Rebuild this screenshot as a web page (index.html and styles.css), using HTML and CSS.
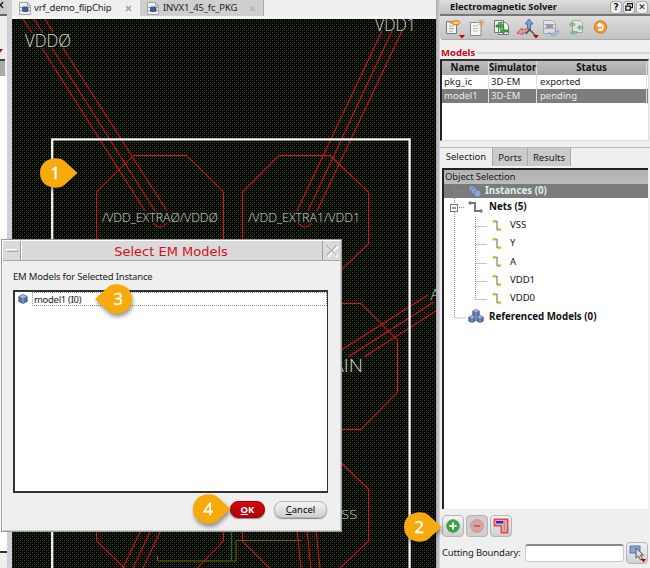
FILE: index.html
```html
<!DOCTYPE html>
<html lang="en">
<head>
<meta charset="utf-8">
<title>Electromagnetic Solver</title>
<link rel="stylesheet" href="styles.css">
</head>
<body>
<svg class="defs" width="0" height="0">
  <defs>
    <symbol id="i-doc" viewBox="0 0 12 13"><path d="M.5.5h8l3 3v9H.5z" fill="#eef0f4" stroke="#a5a5a5"/><path d="M8.500 .5v3h3" fill="none" stroke="#a5a5a5"/><path d="M1 5.500h10M1 8.500h10" stroke="#d98a8a"/><rect x="3" y="4.500" width="6.500" height="5.500" rx="1.500" fill="#3b5d94"/></symbol>
    <symbol id="i-net" viewBox="0 0 10 13"><path d="M2 2.500h3v8h3" fill="none" stroke="#8a8a7a" stroke-width="1.300"/><path d="M.6 2.900l2.800-1.500M6.300 11.600L9 10" stroke="#d9bd20" stroke-width="2.200"/></symbol>
    <symbol id="i-cube" viewBox="0 0 10 10"><path d="M5 .5l4.200 2v5L5 9.600.8 7.500v-5z" fill="#5370a5" stroke="#344f80" stroke-width=".7"/><path d="M5 .8l3.800 1.800L5 4.500 1.200 2.600z" fill="#a4b6da"/><path d="M5 4.500v5" stroke="#c3d0e8" stroke-width=".7"/></symbol>
  </defs>
</svg>
<div class="app">
  <aside class="left">
    <div class="left-close"><svg width="5" height="10"><path d="M-2 2l5 6M3 2l-5 6" stroke="#222" stroke-width="1.500"/></svg></div>
    <svg class="left-tri" width="6" height="4"><path d="M0 0h3L0 4z" fill="#c00"/></svg>
    <div class="left-head"></div>
    <div class="left-body"></div>
    <div class="left-foot"></div>
  </aside>
  <main class="editor">
    <div class="doc-tabs">
      <div class="doc-tab on"><svg width="12" height="13"><use href="#i-doc"/></svg><span>vrf_demo_flipChip</span><svg width="7" height="7"><path d="M1 1l5 5M6 1L1 6" stroke="#999" stroke-width="1.300"/></svg></div>
      <div class="doc-tab off"><svg width="12" height="13"><use href="#i-doc"/></svg><span>INVX1_45_fc_PKG</span><svg width="7" height="7"><path d="M1 1l5 5M6 1L1 6" stroke="#b4b4b4" stroke-width="1.300"/></svg></div>
    </div>
    <svg class="canvas" width="424" height="549" viewBox="12 19 424 549">
      <defs>
        <pattern id="grid" width="4" height="4" patternUnits="userSpaceOnUse">
          <rect width="4" height="4" fill="#050803"/><rect width="1" height="1" x="0" y="0" fill="#3a4a2d"/><rect width="1" height="1" x="2" y="2" fill="#3a4a2d"/><rect width="1" height="1" x="2" y="0" fill="#18210f"/><rect width="1" height="1" x="0" y="2" fill="#18210f"/>
        </pattern>
      </defs>
      <rect x="12" y="19" width="424" height="549" fill="url(#grid)"/>
      <g class="wire">
        <path d="M23 19l9 14M34 19l9 14M45 19l8 13M42 48l103 163M52 48l103 163M63 48l104 163"/>
        <path d="M382 31L297 211M392 31L308 211M402 31L317 211"/>
        <path d="M96.500 260v-68l37-36.500h53l37 36.500v68M242.500 260v-68l36.500-36.500h51l38.500 36.500v52l-38 36h-52"/>
        <path d="M153 223q7 8 14 0M298 223q7 8 14 0"/>
        <path d="M335 303.500h26l36.500 36.500v52l-36.500 37.500h-26M428 295L335 354M434 302L348 357M436 311L364 357"/>
        <path d="M335 457l33.500 32v52l-31.500 30M242.500 528v13l29 29M223.500 528v13l-28 29M96.500 528v13l28 27M141 530l-18 38M151 530l-18 38M161 530l-18 38M297 530l4 38M307 530l4 38M316 530l4 38"/>
      </g>
      <path d="M157.500 556v5H236v-20.500h66" class="olive"/>
      <path d="M231.500 528v33" class="green"/>
      <path d="M52.200 568V139.300H409.600V568" class="boundary"/>
      <g class="label">
        <text x="25" y="47" font-size="18" textLength="46" lengthAdjust="spacingAndGlyphs">VDDØ</text>
        <text x="375" y="30.500" font-size="17.500" textLength="41" lengthAdjust="spacingAndGlyphs">VDD1</text>
        <text x="102" y="222" font-size="12.800" textLength="116" lengthAdjust="spacingAndGlyphs">/VDD_EXTRAØ/VDDØ</text>
        <text x="248" y="222" font-size="12.800" textLength="112" lengthAdjust="spacingAndGlyphs">/VDD_EXTRA1/VDD1</text>
        <text x="430.500" y="300" font-size="15">A</text>
        <text x="332" y="372" font-size="18" textLength="31" lengthAdjust="spacingAndGlyphs">AIN</text>
        <text x="333" y="519" font-size="13.500" textLength="24" lengthAdjust="spacingAndGlyphs">VSS</text>
      </g>
    </svg>
  </main>
  <div class="splitter"></div>
  <section class="solver">
    <header class="dock-title"><span>Electromagnetic Solver</span><i>?</i><i><svg width="8" height="8"><path d="M2.500 2V.7h5v4H6M.8 3.200h4.500v4H.8z" fill="none" stroke="#111" stroke-width="1.300"/></svg></i><i>✕</i></header>
    <div class="toolbar">
      <svg width="210" height="24" viewBox="440 16 210 24">
        <path d="M446.500 21.500h10v12h-10z" fill="#f3f3f3" stroke="#777"/><path d="M449 26h5M449 28.500h5M449 31h4" stroke="#aaa"/><ellipse cx="456" cy="22.700" rx="3.700" ry="2.200" fill="#f8c96f" stroke="#c98222"/><path d="M449 21.500l4 2" stroke="#d59b4a" stroke-width="2"/>
        <path d="M459 35h6l-3 3.500zM533 35h6l-3 3.500z" fill="#c80000"/>
        <path d="M470.500 22.500h10.500v13h-10.500z" fill="#f6f6f6" stroke="#888"/><path d="M473 26h5M473 28.500h5M473 31h5" stroke="#bbb"/><path d="M481 19v7M477.500 22.500h7M478.500 20l5 5M483.500 20l-5 5" stroke="#d99b4e"/>
        <path d="M494.500 20.500h9v12h-9zM498.500 22.500h7l3 3v9h-10z" fill="#eee" stroke="#777"/><path d="M496 25h4v-2.500l4 3.500-4 3.500V27h-4zM508 30h-4v-2l-4 3 4 3v-2h4z" fill="#32ad32" stroke="#167a1c" stroke-width=".6"/>
        <path d="M527.500 29v-5h-2.500l4-5 4 5h-2.500v6z" fill="#7da0dc" stroke="#496fae"/><path d="M528 28.500l-6 1.500v-2l-5 5 6 1.500V33l6-1.500z" fill="#e99b9b" stroke="#b55c5c"/><path d="M529 29l6 6M529 30l-3 4" stroke="#555" stroke-width="1.500"/>
        <g opacity=".55"><path d="M543.500 20.500h9l3 3v10h-12z" fill="#eee" stroke="#888"/><path d="M543 24.500h12M543 28.500h12" stroke="#d77"/><rect x="546" y="24" width="7" height="4" fill="#4b75ae"/><path d="M549 32c3 3 5 1 6-1l4 0c-1 5-8 7-10 1z" fill="#8eb3e8" stroke="#5c86c0"/></g>
        <g opacity=".6"><path d="M572.500 20.500h8l2 2v10h-10z" fill="#eee" stroke="#888"/><path d="M569 24.500l3-2.500v1.500h3v2h-3V27zM577 27.500l3-2.500v1.500h3v2h-3V30zM570 32.500l3-2.500v1.500h4v2h-4V35z" fill="#54bd54" stroke="#278b31" stroke-width=".5"/></g>
        <circle cx="600.500" cy="27" r="6.200" fill="#f59a36" stroke="#d37418"/><path d="M598.500 25h2.500a2.500 2.500 0 1 1-2.500 4" fill="none" stroke="#fff" stroke-width="1.900"/><path d="M596.500 25l4-3v6z" fill="#fff"/>
      </svg>
    </div>
    <div class="group-title"><span>Models</span></div>
    <div class="models">
      <div class="row head"><span>Name</span><span>Simulator</span><span>Status</span></div>
      <div class="row"><span>pkg_ic</span><span>3D-EM</span><span>exported</span></div>
      <div class="row sel"><span>model1</span><span>3D-EM</span><span>pending</span></div>
    </div>
    <nav class="tabs"><span class="on">Selection</span><span>Ports</span><span>Results</span></nav>
    <div class="tree">
      <div class="tree-head">Object Selection</div>
      <div class="tree-body">
        <div class="node root sel"><svg width="14" height="13"><g fill="#8fa6d0" stroke="#556f9f" stroke-width=".7"><circle cx="4" cy="4" r="3.300"/><circle cx="6.500" cy="6" r="3.300"/><circle cx="9.500" cy="8.500" r="3.600"/></g></svg><b>Instances (0)</b></div>
        <div class="node root nets"><svg width="15" height="12"><path d="M2 2h5v8h6" fill="none" stroke="#777" stroke-width="2"/><circle cx="2" cy="2" r="1.700" fill="#777"/><circle cx="13" cy="10" r="1.700" fill="#777"/></svg><b>Nets (5)</b></div>
        <div class="node leaf"><svg width="10" height="13"><use href="#i-net"/></svg><span>VSS</span></div>
        <div class="node leaf"><svg width="10" height="13"><use href="#i-net"/></svg><span>Y</span></div>
        <div class="node leaf"><svg width="10" height="13"><use href="#i-net"/></svg><span>A</span></div>
        <div class="node leaf"><svg width="10" height="13"><use href="#i-net"/></svg><span>VDD1</span></div>
        <div class="node leaf"><svg width="10" height="13"><use href="#i-net"/></svg><span>VDD0</span></div>
        <div class="node root"><svg width="16" height="15"><use href="#i-cube" x="4" y="0" width="8" height="8"/><use href="#i-cube" x="0" y="6" width="8" height="8"/><use href="#i-cube" x="8" y="6" width="8" height="8"/></svg><b>Referenced Models (0)</b></div>
        <svg class="branches" width="44" height="140" viewBox="444 183 44 140"><path d="M454.500 183v20M454.500 211v106h11M454.500 190.500h11M459 206.500h6M475.500 216v82.500M475.500 225.500h11M475.500 243.500h11M475.500 262.500h11M475.500 280.500h11M475.500 298.500h11" class="dots"/><rect x="450.500" y="203.500" width="7" height="7" fill="#fff" stroke="#777"/><path d="M452 207h4" stroke="#222"/></svg>
      </div>
    </div>
    <div class="actions">
      <button><svg width="14" height="14"><circle cx="7" cy="7" r="6.300" fill="#35a73a" stroke="#4aa050"/><path d="M7 3.500v7M3.500 7h7" stroke="#fff" stroke-width="2"/></svg></button>
      <button class="dim"><svg width="14" height="14"><circle cx="7" cy="7" r="6.300" fill="#dda0a0" stroke="#d29090"/><path d="M4 7h6" stroke="#b47070" stroke-width="2"/></svg></button>
      <button><svg width="16" height="16"><path d="M1.500 1.500h13v13h-6v-7h-7z" fill="#fff" stroke="#f4434b" stroke-width="2"/><path d="M3 4.300h7.500" stroke="#2430c8" stroke-width="2.600"/><path d="M11.500 3v10" stroke="#8aa88c" stroke-width="2.500"/></svg></button>
    </div>
    <div class="cutting"><label>Cutting Boundary:</label><div class="field"></div><button><svg width="20" height="20"><rect x="3" y="3" width="10" height="7" fill="#88a4d4" stroke="#5575ae"/><path d="M9 5v10l2.500-2 2 4 2-1-2-4h3z" fill="#ddd" stroke="#555"/><path d="M14 16h5l-2.500 3.500z" fill="#c80000"/></svg></button></div>
  </section>
</div>
<div class="dialog">
  <div class="caption"><span class="menu"><i></i></span><span class="title">Select EM Models</span><span class="x"><svg width="14" height="14"><path d="M2.500 2.500l10 10M12.500 2.500l-10 10" stroke="#fff" stroke-width="2.600"/><path d="M1.500 1.500l10 10M11.500 1.500l-10 10" stroke="#b4b4b4" stroke-width="1.600"/></svg></span></div>
  <p>EM Models for Selected Instance</p>
  <div class="list"><div class="item"><svg width="10" height="10"><use href="#i-cube"/></svg><span>model1 (I0)</span></div></div>
  <div class="buttons"><button class="ok"><u>O</u>K</button><button class="cancel"><u>C</u>ancel</button></div>
</div>
<div class="callout c1"><svg width="46" height="40"><path d="M38.500 17L26 28.500C19 35 1 32 1 17S19-1 26 5.500z"/></svg><span>1</span></div>
<div class="callout c2"><svg width="46" height="40"><path d="M38.500 17L26 28.500C19 35 1 32 1 17S19-1 26 5.500z"/></svg><span>2</span></div>
<div class="callout c3"><svg width="46" height="40"><path d="M1 17L13.500 28.500C20 35 38 32 38 17S20-1 13.500 5.500z"/></svg><span>3</span></div>
<div class="callout c4"><svg width="46" height="40"><path d="M38.500 17L26 28.500C19 35 1 32 1 17S19-1 26 5.500z"/></svg><span>4</span></div>
</body>
</html>
```
FILE: styles.css
```css
* { box-sizing: border-box; }
body { margin: 0; width: 650px; height: 568px; overflow: hidden; position: relative; background: #efefef; color: #222; font: 9.500px/14px "Noto Sans", "Open Sans", sans-serif; }
svg { display: block; flex: none; }
.defs { position: absolute; }
button { font: inherit; padding: 0; border: 1px solid #b5b5b5; border-radius: 4px; background: linear-gradient(#f4f4f4, #cfcfcf); display: flex; align-items: center; justify-content: center; }
.app { display: flex; height: 568px; }

.left { width: 12px; border-right: 5px solid #cfcfd5; display: flex; flex-direction: column; }
.left-close { width: 7px; height: 16px; background: #ccc; border-bottom: 2px solid #666; }
.left-tri { margin-top: 33px; }
.left-head { margin-top: 6px; width: 5px; height: 17px; border-top: 2px solid #444; background: #aaa; }
.left-body { height: 477px; background: #fff; border-bottom: 2px solid #333; }
.left-foot { flex: 1; }

.editor { width: 424px; display: flex; flex-direction: column; }
.doc-tabs { height: 19px; display: flex; border-bottom: 3px solid #f5f5f5; background: #efefef; }
.doc-tab { display: flex; align-items: center; height: 16px; padding-left: 7px; }
.doc-tab.on { width: 128px; }
.doc-tab.off { width: 124px; background: #cfcfcf; border-right: 1px solid #aaa; }
.doc-tab span { width: 91px; margin-left: 3px; white-space: nowrap; letter-spacing: -.18px; }
.doc-tab.off span { width: 86px; margin-left: 4px; }
.wire { fill: none; stroke: #d8160a; stroke-width: 1.050; }
.olive { fill: none; stroke: #686300; }
.green { stroke: #126b36; }
.boundary { fill: none; stroke: #f4f4f4; stroke-width: 2.300; }
.label { fill: #d4d8d0; font-family: "Open Sans", sans-serif; font-weight: 300; }

.splitter { width: 4px; background: linear-gradient(90deg, #aaaab2, #d4d4da); }
.solver { width: 210px; display: flex; flex-direction: column; }
.dock-title { height: 16px; display: flex; align-items: center; gap: 3px; padding: 0 3px 0 10px; background: linear-gradient(#ddd, #c0c0c0); border-bottom: 2px solid #777; font-weight: 700; color: #111; }
.dock-title span { flex: 1; font-size: 9.300px; white-space: nowrap; }
.dock-title i { width: 10px; height: 11px; border-radius: 3px; background: #f0f0f0; box-shadow: 0 0 0 1px #aaa; font: 700 9px/11px "DejaVu Sans"; display: flex; align-items: center; justify-content: center; }
.toolbar { height: 24px; background: linear-gradient(#dedede, #c2c2c2); border-bottom: 1px solid #aaa; border-radius: 0 0 0 4px; }
.group-title { height: 19px; display: flex; align-items: center; gap: 2px; padding: 6px 0 0 1px; color: #c6061c; font-weight: 700; }
.group-title::after { content: ""; height: 2px; flex: 1; background: #d4d4d4; }
.models { height: 82px; margin-right: 1px; background: #fff; border: 1px solid #ddd; border-left: 2px solid #222; border-top: 2px solid #333; }
.row { display: grid; grid-template-columns: 47px 48px 110px; height: 14px; line-height: 13px; }
.row span { padding-left: 2px; border-right: 1px solid #ddd; white-space: nowrap; }
.row span:last-child { padding-left: 3px; }
.row.head { font-weight: 700; background: linear-gradient(#bdbdbd, #a8a8a8); color: #111; font-size: 9.700px; line-height: 14px; }
.row.head span { padding: 0; text-align: center; }
.row.sel { background: #7d7d7d; color: #e4efee; line-height: 14px; }
.tabs { display: flex; height: 22px; margin-top: 6px; border-top: 1px solid #bbb; }
.tabs span { width: 35px; height: 18px; text-align: center; line-height: 19px; background: #cacaca; border-right: 1px solid #aaa; white-space: nowrap; }
.tabs span.on { width: 53px; background: #efefef; line-height: 17px; }
.tabs span:last-child { width: 43px; }
.tree { margin: -1px 2px 0; width: 206px; height: 341px; border-left: 2px solid #222; border-top: 2px solid #222; background: #fff; }
.tree-head { height: 14px; line-height: 13px; background: linear-gradient(#b2b2b2, #bcbcbc); padding-left: 1px; letter-spacing: -.1px; }
.tree-body { position: relative; color: #111; }
.branches { position: absolute; left: 0; top: 0; }
.dots { fill: none; stroke: #888; stroke-dasharray: 1 1; }
.node { display: flex; align-items: center; height: 18.300px; white-space: nowrap; }
.node.root { padding-left: 24px; gap: 5px; }
.node.sel { height: 14px; background: #7b7b7b; color: #dff1ef; gap: 3px; }
.node.nets { height: 18px; gap: 6px; }
.node.leaf { padding-left: 48px; gap: 8px; }
.node b { font-size: 9.750px; }
.actions { display: flex; gap: 2px; padding: 6px 0 0 2px; height: 28px; }
.actions button { width: 22px; height: 22px; }
.actions .dim { background: #cfcfcf; }
.cutting { display: flex; padding: 0 1px 0 2px; margin-top: 4px; height: 24px; align-items: center; }
.cutting label { width: 83px; white-space: nowrap; letter-spacing: -.17px; }
.field { width: 99px; height: 18px; border: 1px solid #ccc; border-top: 2px solid #888; border-radius: 3px; background: #fff; }
.cutting button { width: 22px; height: 22px; margin-left: 2px; }

.dialog { position: absolute; left: 1px; top: 239px; width: 341px; height: 293px; background: #efefef; border: 1px solid #999; box-shadow: inset 1px 1px #fff, inset -1px -1px #ccc; }
.caption { display: flex; height: 20px; margin: 1px; background: #dadada; border-bottom: 1px solid #aaa; }
.menu { width: 18px; border-right: 1px solid #999; display: flex; align-items: center; justify-content: center; }
.menu i { width: 12px; height: 3px; border: 1px solid #aaa; border-top-color: #fff; border-left-color: #fff; }
.title { flex: 1; text-align: center; padding-right: 2px; color: #d4101b; font: 13px/21px "DejaVu Sans"; border-left: 1px solid #fff; }
.x { width: 18px; border-left: 1px solid #999; display: flex; align-items: center; justify-content: center; }
.dialog p { margin: 9px 0 0 11px; height: 20px; letter-spacing: -.18px; }
.list { margin: 0 0 0 11px; width: 315px; height: 203px; border: 2px solid #333; border-width: 2px 1px 2px 2px; background: #fff; }
.item { display: flex; align-items: center; height: 14px; padding-left: 3px; gap: 4px; }
.item span { flex: 1; height: 14px; line-height: 13px; padding-left: 1px; border: 1px dotted #999; letter-spacing: -.3px; }
.buttons { display: flex; padding: 8px 0 0 228px; gap: 9px; }
.buttons button { height: 17px; border-radius: 8px; box-shadow: 0 1px 1px #888; }
.buttons .ok { width: 35px; background: linear-gradient(#d30710, #b00008); color: #fff; border-color: #a00; font-weight: 700; }
.buttons .cancel { width: 53px; }

.callout { position: absolute; width: 40px; height: 34px; filter: drop-shadow(1px 3px 2px rgba(0,0,0,.4)); }
.callout svg { position: absolute; left: 0; top: 0; fill: #f8aa0c; }
.callout span { position: absolute; left: 0; top: 0; width: 32px; line-height: 34px; text-align: center; color: #fff; font-size: 17px; -webkit-text-stroke: .3px #fff; }
.c1 { left: 39px; top: 156px; }
.c2 { left: 403px; top: 510px; }
.c3 { left: 94px; top: 282px; }
.c3 span { left: 8px; }
.c4 { left: 192px; top: 492px; }
```
